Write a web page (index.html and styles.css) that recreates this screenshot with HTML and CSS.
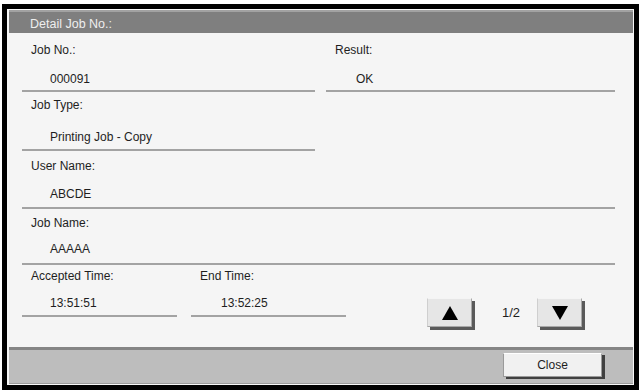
FILE: index.html
```html
<!DOCTYPE html>
<html lang="en">
<head>
    <meta charset="UTF-8">
    <meta name="viewport" content="width=device-width, initial-scale=1.0">
    <title>Detail Job No.</title>
    <link rel="stylesheet" href="styles.css">
</head>
<body>
    <div class="panel">
        <div class="panel-title">Detail Job No.:</div>

        <div class="panel-body">
            <div class="row row-jobno">
                <div class="field field-half">
                    <div class="field-label">Job No.:</div>
                    <div class="field-value">000091</div>
                </div>
                <div class="field field-result">
                    <div class="field-label">Result:</div>
                    <div class="field-value value-wide">OK</div>
                </div>
            </div>

            <div class="row row-type">
                <div class="field field-half">
                    <div class="field-label">Job Type:</div>
                    <div class="field-value">Printing Job - Copy</div>
                </div>
            </div>

            <div class="row row-user">
                <div class="field field-full">
                    <div class="field-label">User Name:</div>
                    <div class="field-value">ABCDE</div>
                </div>
            </div>

            <div class="row row-name">
                <div class="field field-full">
                    <div class="field-label">Job Name:</div>
                    <div class="field-value">AAAAA</div>
                </div>
            </div>

            <div class="row row-time">
                <div class="field field-time">
                    <div class="field-label">Accepted Time:</div>
                    <div class="field-value">13:51:51</div>
                </div>
                <div class="field field-time field-end">
                    <div class="field-label">End Time:</div>
                    <div class="field-value value-wide">13:52:25</div>
                </div>

                <div class="pager">
                    <button class="page-btn" type="button">
                        <svg width="16" height="14" viewBox="0 0 16 14"><polygon points="0,14 8,0 16,14" fill="#000"/></svg>
                    </button>
                    <span class="page-count">1/2</span>
                    <button class="page-btn" type="button">
                        <svg width="16" height="14" viewBox="0 0 16 14"><polygon points="0,0 16,0 8,14" fill="#000"/></svg>
                    </button>
                </div>
            </div>
        </div>

        <div class="panel-footer">
            <button class="close-btn" type="button">Close</button>
        </div>
    </div>
</body>
</html>
```

FILE: styles.css
```css
body {
    margin: 0;
    padding: 0;
    background-color: #ffffff;
    font-family: "Liberation Sans", Arial, sans-serif;
    font-size: 12px;
    color: #1e1e1e;
}

.panel {
    box-sizing: border-box;
    width: 637px;
    height: 386px;
    margin: 4px 0 0 2px;
    padding: 1px 1px 1px 2px;
    border: 5px solid #000;
    background: #f8f8f8;
    display: flex;
    flex-direction: column;
}

.panel-title {
    box-sizing: border-box;
    height: 23px;
    padding: 4px 0 0 21px;
    line-height: 17px;
    font-size: 12.5px;
    color: #eeeeee;
    background: #7f7f7f;
    border-top: 2px solid #a2a2a2;
}

.panel-body {
    height: 314px;
    padding: 0 18px 0 13px;
    background: #f5f5f5;
}

.row {
    display: flex;
    align-items: flex-start;
}

.field {
    border-bottom: 2px solid #a3a3a3;
}

.field-half {
    width: 293px;
}

.field-result {
    width: 289px;
    margin-left: 11px;
}

.field-full {
    flex: 1;
}

.field-time {
    width: 155px;
}

.field-end {
    margin-left: 14px;
}

.field-label {
    line-height: 14px;
    padding-left: 9px;
    padding-top: 7px;
}

.field-value {
    line-height: 14px;
    padding-left: 28px;
    padding-top: 14px;
    padding-bottom: 5px;
}

.value-wide {
    padding-left: 30px;
}

/* each row sits a little differently on the panel */
.row-jobno .field-label { padding-top: 10px; }
.row-jobno .field-value { padding-top: 15px; padding-bottom: 4px; }

.row-type .field-label { padding-top: 6px; }
.row-type .field-value { padding-top: 18px; padding-bottom: 5px; }

.row-user .field-label { padding-top: 8px; }
.row-user .field-value { padding-top: 14px; padding-bottom: 6px; }

.row-name .field-label { padding-top: 7px; }
.row-name .field-value { padding-top: 12px; padding-bottom: 7px; }

.row-time .field-label { padding-top: 4px; }
.row-time .field-value { padding-top: 13px; padding-bottom: 5px; }

.pager {
    display: flex;
    align-items: center;
    margin-left: 81px;
    margin-top: 33px;
}

.page-btn {
    box-sizing: border-box;
    width: 45px;
    height: 29px;
    padding: 0;
    display: flex;
    align-items: center;
    justify-content: center;
    background: #e6e6e6;
    border: 1px solid #a8a8a8;
    border-top-color: #f4f4f4;
    border-left-color: #cfcfcf;
    box-shadow: 3px 3px 0 #5a5a5a;
}

.page-count {
    font-size: 13px;
    line-height: 14px;
    margin: 0 17px 0 30px;
}

.panel-footer {
    box-sizing: border-box;
    height: 37px;
    display: flex;
    justify-content: flex-end;
    align-items: flex-start;
    padding: 3px 31px 0 0;
    background: #bdbdbd;
    border-top: 3px solid #858585;
    border-bottom: 1px solid #9c9c9c;
}

.close-btn {
    box-sizing: border-box;
    width: 99px;
    height: 24px;
    padding: 0;
    font-family: "Liberation Sans", Arial, sans-serif;
    font-size: 12px;
    color: #1e1e1e;
    background: #f1f1f1;
    border: 1px solid #9a9a9a;
    border-top-color: #ffffff;
    box-shadow: 3px 2px 0 #404040;
}
```
